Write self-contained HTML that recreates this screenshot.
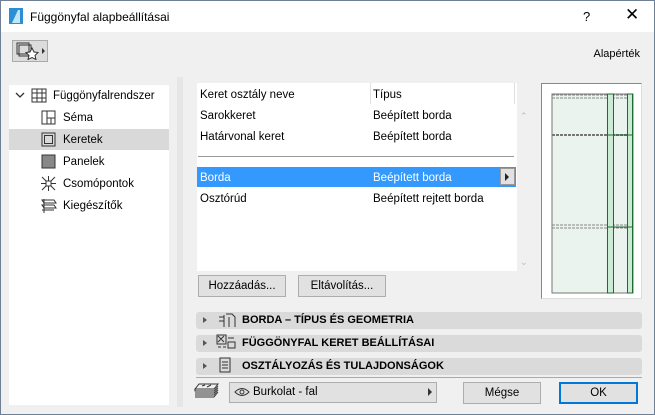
<!DOCTYPE html>
<html><head><meta charset="utf-8"><style>
*{box-sizing:border-box;margin:0;padding:0}
body{width:655px;height:415px;overflow:hidden;font-family:"Liberation Sans",sans-serif;font-size:11.5px;color:#000;background:#f0f0f0;position:relative}
.a{position:absolute}
.win{left:0;top:0;width:655px;height:415px;border:1px solid #6f7f94}
.title{left:1px;top:1px;width:653px;height:31px;background:#fff}
.btn{position:absolute;background:#e1e1e1;border:1px solid #adadad;text-align:center;line-height:19px;font-size:11.5px}
.sec{position:absolute;left:196px;width:446px;height:17px;background:#dadada;border-radius:3px;font-weight:bold;font-size:11px;line-height:17px}
.sec .tri{position:absolute;left:7px;top:5px;border-left:4px solid #555;border-top:3.5px solid transparent;border-bottom:3.5px solid transparent}
.sec span{position:absolute;left:46px}
.row{position:absolute;left:0;width:160px;height:21px;line-height:22px}
.row span{position:absolute;left:38px}
</style></head><body>
<div class="a win"></div>
<div class="a title"></div>
<svg class="a" style="left:9px;top:8px" width="14" height="16"><rect width="14" height="16" fill="#2a8fd6"/><path d="M3 15 L9 2 L11 2 L11 15" fill="#bfe6f7"/></svg>
<div class="a" style="left:30px;top:10px;font-size:12px">Függönyfal alapbeállításai</div>
<div class="a" style="left:583px;top:9px;font-size:13px">?</div>
<div class="a" style="left:625px;top:5px;font-size:17px">✕</div>
<div class="a" style="left:12px;top:40px;width:36px;height:22px;background:#dcdcdc;border:1px solid #aaa"></div>
<svg class="a" style="left:15px;top:42px" width="32" height="18"><rect x="2" y="1" width="12" height="11" fill="none" stroke="#333"/><rect x="4" y="3" width="12" height="11" fill="none" stroke="#333"/><path d="M17 6l2 4 4 .5-3 3 1 4-4-2-4 2 1-4-3-3 4-.5z" fill="#fff" stroke="#333"/><path d="M27 6l3 3-3 3z" fill="#333"/></svg>
<div class="a" style="right:15px;top:48px;font-size:11px">Alapérték</div>
<div class="a" style="left:9px;top:85px;width:160px;height:320px;background:#fff">
 <div class="row" style="top:0"><svg class="a" style="left:6px;top:7px" width="10" height="8"><path d="M1 1l4 4 4-4" fill="none" stroke="#333" stroke-width="1.3"/></svg><svg class="a" style="left:22px;top:3px" width="16" height="15"><path d="M1 1h14v13H1zM1 5h14M1 10h14M6 1v13M11 1v13" fill="none" stroke="#333"/></svg><span style="left:44px">Függönyfalrendszer</span></div>
 <div class="row" style="top:22px"><svg class="a" style="left:32px;top:3px" width="15" height="15"><path d="M1 1h13v13H1zM6 1v13M6 8h8M10 8v6" fill="none" stroke="#333"/></svg><span style="left:54px">Séma</span></div>
 <div class="row" style="top:44px;background:#d9d9d9"><svg class="a" style="left:32px;top:3px" width="15" height="15"><rect x="1" y="1" width="13" height="13" fill="none" stroke="#333"/><rect x="3.5" y="3.5" width="8" height="8" fill="none" stroke="#333"/></svg><span style="left:54px">Keretek</span></div>
 <div class="row" style="top:66px"><svg class="a" style="left:32px;top:3px" width="15" height="15"><rect x="1" y="1" width="13" height="13" fill="#888" stroke="#333"/></svg><span style="left:54px">Panelek</span></div>
 <div class="row" style="top:88px"><svg class="a" style="left:32px;top:3px" width="15" height="15"><path d="M1 1l13 13M14 1L1 14M7.5 0v15M0 7.5h15" stroke="#333" fill="none"/><rect x="5" y="5" width="5" height="5" fill="#fff" stroke="#333"/></svg><span style="left:54px">Csomópontok</span></div>
 <div class="row" style="top:110px"><svg class="a" style="left:32px;top:3px" width="16" height="15"><path d="M1 2h12l2 3H3zM1 7h12l2 3H3zM1 12h12M3 1v14" fill="none" stroke="#333"/></svg><span style="left:54px">Kiegészítők</span></div>
</div>
<div class="a" style="left:177px;top:77px;width:6px;height:330px;background:#e6e6e6"></div>
<div class="a" style="left:197px;top:83px;width:320px;height:188px;background:#fff"></div>
<div class="a" style="left:197px;top:83px;width:318px;height:21px;border-right:1px solid #e0e0e0"></div>
<div class="a" style="left:370px;top:83px;width:1px;height:21px;background:#e0e0e0"></div>
<div class="a" style="left:200px;top:89px">Keret osztály neve</div>
<div class="a" style="left:373px;top:89px">Típus</div>
<div class="a" style="left:200px;top:110px">Sarokkeret</div><div class="a" style="left:373px;top:110px">Beépített borda</div>
<div class="a" style="left:200px;top:131px">Határvonal keret</div><div class="a" style="left:373px;top:131px">Beépített borda</div>
<div class="a" style="left:198px;top:156px;width:316px;height:1px;background:#999"></div>
<div class="a" style="left:197px;top:167px;width:319px;height:20px;background:#3399ff"></div>
<div class="a" style="left:200px;top:172px;color:#fff">Borda</div><div class="a" style="left:373px;top:172px;color:#fff">Beépített borda</div>
<div class="a" style="left:500px;top:168px;width:15px;height:17px;background:#e1e1e1;border:1px solid #999"></div>
<svg class="a" style="left:505px;top:173px" width="5" height="8"><path d="M0 0l4 4-4 4z" fill="#222"/></svg>
<div class="a" style="left:200px;top:193px">Osztórúd</div><div class="a" style="left:373px;top:193px">Beépített rejtett borda</div>
<div class="a" style="left:520px;top:111px;color:#bbb;font-size:9px">&#8963;</div>
<div class="a" style="left:520px;top:257px;color:#bbb;font-size:9px">&#8964;</div>
<div class="btn" style="left:198px;top:275px;width:88px;height:22px;line-height:21px">Hozzáadás...</div>
<div class="btn" style="left:298px;top:275px;width:88px;height:22px;line-height:21px">Eltávolítás...</div>
<div class="a" style="left:541px;top:83px;width:101px;height:216px;background:#fff;border:1px solid #888;border-right-color:#ddd;border-bottom-color:#ddd"></div>
<svg class="a" style="left:551px;top:93px" width="84" height="202"><rect x="1" y="1" width="81" height="199" fill="#eaf3ee" stroke="#777"/><path d="M1 2h78M1 5h78M1 132h78M1 135h78" stroke="#888" stroke-dasharray="3 1"/><path d="M1 42h78" stroke="#777" stroke-width="2" stroke-dasharray="3 1"/><rect x="56.5" y="1" width="6" height="199" fill="#ccebd5" stroke="#1d6b2e"/><rect x="76.5" y="1" width="5" height="199" fill="#ccebd5" stroke="#1d6b2e"/><path d="M56 42h26M56 134h26" stroke="#1d6b2e"/></svg>
<div class="sec" style="top:312px"><div class="tri"></div><span>BORDA – TÍPUS ÉS GEOMETRIA</span></div>
<div class="sec" style="top:335px"><div class="tri"></div><span>FÜGGÖNYFAL KERET BEÁLLÍTÁSAI</span></div>
<div class="sec" style="top:358px"><div class="tri"></div><span>OSZTÁLYOZÁS ÉS TULAJDONSÁGOK</span></div>
<svg class="a" style="left:216px;top:312px" width="22" height="62"><path d="M3 5h5M3 9h5M8 3v12M10 2l6 0 3 3v10M13 5v10" stroke="#333" fill="none"/><path d="M2 24l6 6M8 24l-6 6M1 23h9v9H1zM12 26h6M12 30h7v6h-7zM2 35h3M7 35h3" stroke="#333" fill="none"/><path d="M4 48h10v14H4zM6 52h6M6 55h6M6 58h6" stroke="#333" fill="none" transform="translate(0,-2)"/></svg>
<div class="a" style="left:196px;top:377px;width:446px;height:1px;background:#aaa"></div>
<svg class="a" style="left:194px;top:383px" width="26" height="16"><path d="M5 1h19l-4 5H1zM1 6v2h19l4-5M1 10h19l4-5M1 12h19l4-5M1 14h19l4-5M8 3l3-1M13 4l4-2" stroke="#333" fill="none"/></svg>
<div class="a" style="left:229px;top:382px;width:208px;height:21px;background:#e1e1e1;border:1px solid #adadad"></div>
<svg class="a" style="left:234px;top:387px" width="16" height="10"><path d="M1 5Q8-2 15 5Q8 12 1 5z" fill="none" stroke="#333"/><circle cx="8" cy="5" r="2" fill="none" stroke="#333"/></svg>
<div class="a" style="left:253px;top:386px">Burkolat - fal</div>
<svg class="a" style="left:428px;top:388px" width="5" height="8"><path d="M0 0l4 4-4 4z" fill="#333"/></svg>
<div class="btn" style="left:463px;top:382px;width:78px;height:22px;line-height:21px">Mégse</div>
<div class="btn" style="left:559px;top:382px;width:79px;height:22px;border:2px solid #0078d7;line-height:19px">OK</div>
</body></html>
